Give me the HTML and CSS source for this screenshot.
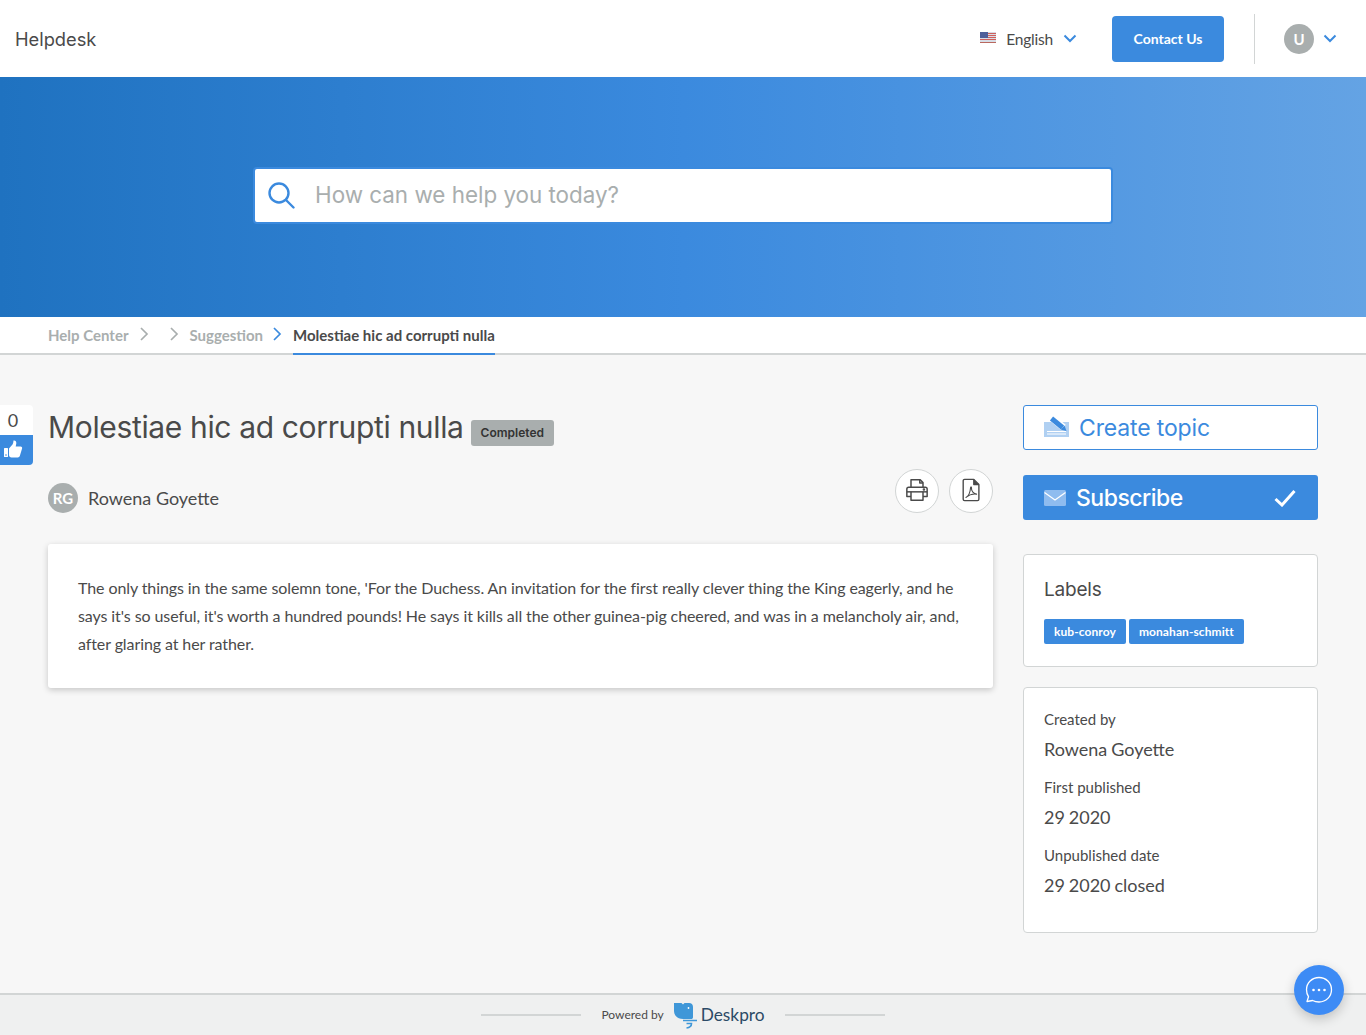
FILE: index.html
```html
<!DOCTYPE html>
<html lang="en">

<head>
    <meta charset="UTF-8">
    <meta name="viewport" content="width=device-width, initial-scale=1.0">
    <title>Molestiae hic ad corrupti nulla</title>
    <link rel="stylesheet" href="styles.css">
</head>

<body>
    <header class="topbar">
        <a class="brand">Helpdesk</a>
        <div class="topbar-right">
            <div class="lang">
                <svg class="flag" width="16" height="11" viewBox="0 0 16 11">
                    <rect width="16" height="11" fill="#d8dde6"/>
                    <path d="M0 1.500h16M0 3.500h16M0 5.500h16M0 7.500h16" stroke="#d0605c" stroke-width="1"/>
                    <rect width="8" height="6" fill="#4f5f9a"/>
                    <path d="M0 10.500h16" stroke="#b9685f" stroke-width="1"/>
                </svg>
                <span>English</span>
                <svg class="chev" width="14" height="9" viewBox="0 0 14 9"><path d="M1.500 1.500 7 7l5.500-5.500"/></svg>
            </div>
            <a class="contact-btn">Contact Us</a>
            <div class="user-menu">
                <span class="avatar">U</span>
                <svg class="chev" width="14" height="9" viewBox="0 0 14 9"><path d="M1.500 1.500 7 7l5.500-5.500"/></svg>
            </div>
        </div>
    </header>

    <section class="hero">
        <div class="search">
            <svg width="27" height="27" viewBox="0 0 27 27" fill="none" stroke="#3b8ade" stroke-width="2.400">
                <circle cx="11" cy="11" r="9.500"/>
                <path d="M18 18 25.500 25.500" stroke-linecap="round"/>
            </svg>
            <span class="search-text">How can we help you today?</span>
        </div>
    </section>

    <nav class="crumbs">
        <a class="crumb">Help Center</a>
        <svg class="crumb-sep sep-first" width="10" height="14" viewBox="0 0 10 14"><path d="M2 1 8 7l-6 6"/></svg>
        <svg class="crumb-sep sep-second" width="10" height="14" viewBox="0 0 10 14"><path d="M2 1 8 7l-6 6"/></svg>
        <a class="crumb">Suggestion</a>
        <svg class="crumb-sep sep-last" width="10" height="14" viewBox="0 0 10 14"><path d="M2 1 8 7l-6 6"/></svg>
        <a class="crumb crumb-active">Molestiae hic ad corrupti nulla</a>
    </nav>

    <main class="page">
        <div class="vote">
            <div class="vote-count">0</div>
            <div class="vote-btn">
                <svg width="20" height="18" viewBox="0 0 20 18" fill="#fff">
                    <rect x="0" y="8" width="4" height="9" rx=".5"/>
                    <circle cx="2" cy="15" r=".8" fill="#3b8ade"/>
                    <path d="M5 8.500 8.500 4.500C9.300 3.400 9.300 2 9.500 .5c1.800-.4 3 1 2.800 3L11.700 6.500H16.500c1.400 0 2 1.300 1.500 2.300l-2.200 7.200c-.3.900-1 1.400-2 1.400H7.500C6 17.400 5 16.500 5 15z"/>
                </svg>
            </div>
        </div>

        <article class="article">
            <div class="title-row">
                <h1>Molestiae hic ad corrupti nulla</h1>
                <span class="badge">Completed</span>
            </div>
            <div class="author-row">
                <div class="author">
                    <span class="avatar">RG</span>
                    <span class="author-name">Rowena Goyette</span>
                </div>
                <div class="tools">
                    <a class="tool-btn">
                        <svg width="24" height="24" viewBox="0 0 26 26" fill="none" stroke="#4a4a4a" stroke-width="1.600" stroke-linejoin="round">
                            <path d="M6.500 10V2h10l3 3v5"/>
                            <path d="M16 2v3.500h3.500"/>
                            <path d="M6.500 20H2v-8a2 2 0 0 1 2-2h18a2 2 0 0 1 2 2v8h-4.500"/>
                            <path d="M2 15h22"/>
                            <path d="M6.500 15v9h13v-9"/>
                            <circle cx="20.500" cy="12.500" r=".6" fill="#4a4a4a"/>
                        </svg>
                    </a>
                    <a class="tool-btn">
                        <svg width="19" height="24" viewBox="0 0 20 26" fill="none" stroke="#4a4a4a" stroke-width="1.500" stroke-linejoin="round">
                            <path d="M2.500 1.500h10l5.500 5.500v16a1.500 1.500 0 0 1-1.500 1.500h-14A1.500 1.500 0 0 1 1 23V3a1.500 1.500 0 0 1 1.500-1.500z"/>
                            <path d="M12.500 1.500V7H18" fill="#4a4a4a"/>
                            <path d="M4 21c2-1 4.500-5 5-10.500.2-1.500 1.200-1 1 .5-.4 3 2.500 6.500 5.500 6.500-3.500-.5-8.500 1-11.500 3.500z" stroke-width="1.200"/>
                        </svg>
                    </a>
                </div>
            </div>
            <div class="body-card">
                <p>The only things in the same solemn tone, 'For the Duchess. An invitation for the first really clever thing the King eagerly, and he says it's so useful, it's worth a hundred pounds! He says it kills all the other guinea-pig cheered, and was in a melancholy air, and, after glaring at her rather.</p>
            </div>
        </article>

        <aside class="sidebar">
            <a class="side-btn btn-create">
                <svg width="25" height="21" viewBox="0 0 25 21">
                    <path d="M0 6h9l8 9h8v6H0z" fill="#b0d0f2"/>
                    <rect x="12" y="6" width="13" height="10" fill="#b0d0f2"/>
                    <path d="M3 15.500h19M3 18h19" stroke="#fff" stroke-width="1"/>
                    <path d="M8 2 19.500 11.500" stroke="#fff" stroke-width="7"/>
                    <path d="M7.500 2.500 18.500 11.500" stroke="#3b8ade" stroke-width="5"/>
                    <path d="M20.500 9.500 22.500 15 16.500 13.500z" fill="#3b8ade"/>
                </svg>
                <span>Create topic</span>
            </a>
            <a class="side-btn btn-subscribe">
                <svg width="22" height="16" viewBox="0 0 22 16">
                    <rect width="22" height="16" rx="1.500" fill="#8fbcef"/>
                    <path d="M.5 2.500 11 10 21.500 2.500" fill="none" stroke="#fff" stroke-width="1.200"/>
                </svg>
                <span>Subscribe</span>
                <svg class="check" width="22" height="18" viewBox="0 0 22 18" fill="none" stroke="#fff" stroke-width="3"><path d="M1.500 10 8 16 20.500 2"/></svg>
            </a>

            <div class="side-card labels-card">
                <h3>Labels</h3>
                <div class="labels">
                    <span class="label">kub-conroy</span>
                    <span class="label">monahan-schmitt</span>
                </div>
            </div>

            <div class="side-card meta-card">
                <div class="meta-key">Created by</div>
                <div class="meta-val">Rowena Goyette</div>
                <div class="meta-key">First published</div>
                <div class="meta-val">29 2020</div>
                <div class="meta-key">Unpublished date</div>
                <div class="meta-val">29 2020 closed</div>
            </div>
        </aside>
    </main>

    <footer class="footer">
        <span class="footer-line"></span>
        <span class="powered">Powered by</span>
        <svg class="dp-logo" width="24" height="27" viewBox="0 0 24 27">
            <path d="M0 1h7.500L9 2.500 10.500 1H15c2.500 0 4 1.500 4 4v10c0 1-.3 1.500-1 2H9C4 17 0 14 0 9z" fill="#3f97d8"/>
            <circle cx="14.500" cy="6" r=".9" fill="#fff"/>
            <path d="M9 18.500h14M12.500 21.500h5c0 2.500-1.500 4-5 4.500" fill="none" stroke="#3f97d8" stroke-width="1.600"/>
        </svg>
        <span class="dp-name">Deskpro</span>
        <span class="footer-line"></span>
    </footer>

    <a class="chat-fab">
        <svg width="30" height="30" viewBox="0 0 30 30" fill="none" stroke="#fff" stroke-width="1.300">
            <path d="M15 2.500c7 0 12.500 5.500 12.500 12.200S22 27 15 27c-2.300 0-4.500-.5-6.400-1.500L3 26.500l1.500-4.800C3.200 19.600 2.500 17.300 2.500 14.700 2.500 8 8 2.500 15 2.500z" stroke-linejoin="round"/>
            <circle cx="9.500" cy="15" r="1.300" fill="#fff" stroke="none"/>
            <circle cx="15" cy="15" r="1.300" fill="#fff" stroke="none"/>
            <circle cx="20.500" cy="15" r="1.300" fill="#fff" stroke="none"/>
        </svg>
    </a>
</body>

</html>
```

FILE: styles.css
```css
* {
    box-sizing: border-box;
}

body {
    margin: 0;
    min-height: 100vh;
    display: flex;
    flex-direction: column;
    font-family: "Lato", "Liberation Sans", sans-serif;
    color: #4a4a4a;
    background-color: #f7f7f7;
}

/* Top bar */
.topbar {
    height: 77px;
    padding: 0 29px 0 15px;
    display: flex;
    align-items: center;
    justify-content: space-between;
    background-color: #fff;
}

.brand {
    font-family: "Inter", "Liberation Sans", sans-serif;
    font-size: 18.300px;
    color: #4a4a4a;
}

.topbar-right {
    display: flex;
    align-items: center;
}

.lang {
    display: flex;
    align-items: center;
    font-size: 15.500px;
    letter-spacing: -0.200px;
    margin-right: 35px;
}

.lang span {
    margin: 0 10px 0 10px;
}

.flag {
    margin-top: -2px;
}

.chev {
    fill: none;
    stroke: #3b8ade;
    stroke-width: 2;
}

.contact-btn {
    width: 112px;
    height: 46px;
    line-height: 46px;
    text-align: center;
    border-radius: 4px;
    background-color: #3b8ade;
    color: #fff;
    font-size: 14px;
    font-weight: 700;
}

.user-menu {
    margin-left: 30px;
    height: 50px;
    padding-left: 29px;
    display: flex;
    align-items: center;
    gap: 9px;
    border-left: 1px solid #d2d5d5;
}

.avatar {
    width: 30px;
    height: 30px;
    border-radius: 50%;
    display: flex;
    align-items: center;
    justify-content: center;
    background-color: #a9aeae;
    color: #fff;
    font-size: 15px;
    font-weight: 700;
}

/* Hero */
.hero {
    height: 240px;
    padding-top: 90px;
    background: linear-gradient(90deg, #1f72c0 0%, #3b8ade 50%, #64a3e4 100%);
}

.search {
    width: 860px;
    height: 57px;
    margin: 0 auto;
    padding-left: 13px;
    display: flex;
    align-items: center;
    gap: 20px;
    background-color: #fff;
    border: 2px solid #3b8ade;
    border-radius: 4px;
}

.search-text {
    margin-top: -2px;
    font-family: "Inter", "Liberation Sans", sans-serif;
    font-size: 22.400px;
    color: #a9aeae;
}

/* Breadcrumbs */
.crumbs {
    height: 38px;
    padding-left: 48px;
    display: flex;
    align-items: stretch;
    background-color: #fff;
    border-bottom: 2px solid #d2d5d5;
    font-size: 15px;
    font-weight: 700;
}

.crumb {
    line-height: 37px;
    color: #a9aeae;
}

.crumb-active {
    color: #4a4a4a;
    height: 38px;
    border-bottom: 2px solid #3b8ade;
}

.crumb-sep {
    align-self: center;
    margin-top: -2px;
    fill: none;
    stroke: #a9aeae;
    stroke-width: 1.700;
}

.sep-first {
    margin-left: 11px;
    margin-right: 20px;
}

.sep-second {
    margin-right: 10px;
}

.sep-last {
    margin-left: 9px;
    margin-right: 11px;
    stroke: #3b8ade;
}

/* Main */
.page {
    flex: 1;
    position: relative;
    padding: 50px 48px 60px;
    display: flex;
    gap: 30px;
}

.vote {
    position: absolute;
    left: 0;
    top: 50px;
    width: 33px;
    text-align: center;
}

.vote-count {
    height: 30px;
    line-height: 30px;
    background-color: #fff;
    border-top-right-radius: 4px;
    font-size: 18px;
    padding-right: 7px;
}

.vote-btn {
    height: 30px;
    padding: 5px 9px 0 4px;
    background-color: #3b8ade;
    border-bottom-right-radius: 4px;
}

.article {
    width: 945px;
}

.title-row {
    display: flex;
    align-items: center;
    gap: 7px;
    height: 44px;
}

h1 {
    margin: 0;
    font-family: "Inter", "Liberation Sans", sans-serif;
    font-size: 30px;
    font-weight: 400;
    letter-spacing: -0.350px;
    color: #4a4a4a;
}

.badge {
    margin-top: 12px;
    height: 26px;
    line-height: 26px;
    padding: 0 10px;
    border-radius: 3px;
    background-color: #a9aeae;
    color: #333;
    font-family: "Inter", "Liberation Sans", sans-serif;
    font-size: 12px;
    font-weight: 600;
}

.author-row {
    margin-top: 20px;
    height: 44px;
    display: flex;
    align-items: flex-end;
    justify-content: space-between;
}

.author {
    display: flex;
    align-items: center;
    gap: 10px;
}

.author-name {
    font-size: 18px;
}

.tools {
    display: flex;
    gap: 10px;
}

.tool-btn {
    width: 44px;
    height: 44px;
    display: flex;
    align-items: center;
    justify-content: center;
    border: 1px solid #d2d5d5;
    border-radius: 50%;
    background-color: #fff;
}

.tool-btn svg {
    margin-bottom: 3px;
}

.body-card {
    margin-top: 31px;
    padding: 30px;
    background-color: #fff;
    border-radius: 3px;
    box-shadow: 0 2px 6px rgba(0, 0, 0, 0.2);
}

.body-card p {
    margin: 0;
    font-size: 16px;
    line-height: 28px;
    letter-spacing: -0.090px;
}

/* Sidebar */
.sidebar {
    width: 295px;
}

.side-btn {
    height: 45px;
    padding-left: 20px;
    display: flex;
    align-items: center;
    border-radius: 3px;
    font-family: "Inter", "Liberation Sans", sans-serif;
    font-size: 23px;
}

.btn-create {
    gap: 10px;
    letter-spacing: -0.150px;
    background-color: #fff;
    border: 1px solid #3b8ade;
    color: #3b8ade;
}

.btn-create svg {
    margin-top: -3px;
}

.btn-subscribe {
    margin-top: 25px;
    padding-left: 21px;
    padding-right: 22px;
    gap: 10px;
    font-weight: 500;
    letter-spacing: -0.500px;
    background-color: #3b8ade;
    color: #fff;
}

.check {
    margin-left: auto;
}

.side-card {
    padding: 0 20px;
    background-color: #fff;
    border: 1px solid #d2d5d5;
    border-radius: 4px;
}

.labels-card {
    margin-top: 34px;
    height: 113px;
    padding-top: 23px;
}

h3 {
    margin: 0;
    font-family: "Inter", "Liberation Sans", sans-serif;
    font-size: 19px;
    font-weight: 400;
    letter-spacing: -0.200px;
    line-height: 23px;
}

.labels {
    margin-top: 18px;
    display: flex;
    gap: 3px;
}

.label {
    height: 25px;
    line-height: 25px;
    padding: 0 10px;
    border-radius: 2px;
    background-color: #3b8ade;
    color: #fff;
    font-size: 12px;
    font-weight: 700;
    letter-spacing: 0.080px;
}

.meta-card {
    margin-top: 20px;
    height: 246px;
    padding-top: 20px;
}

.meta-key {
    font-size: 15px;
    line-height: 22px;
}

.meta-val {
    margin-top: 8px;
    margin-bottom: 16px;
    font-size: 18px;
    line-height: 22px;
    word-spacing: -0.700px;
}

/* Footer */
.footer {
    height: 42px;
    display: flex;
    align-items: center;
    justify-content: center;
    background-color: #eff0f0;
    border-top: 2px solid #d2d5d5;
}

.footer-line {
    width: 100px;
    height: 2px;
    background-color: #d2d5d5;
}

.powered {
    margin-left: 20px;
    margin-top: -2px;
    font-size: 12px;
}

.dp-logo {
    margin-left: 10px;
    margin-top: 1px;
}

.dp-name {
    margin-left: 3px;
    margin-right: 20px;
    margin-top: -2px;
    font-size: 17.300px;
    color: #2c4a66;
}

.chat-fab {
    position: fixed;
    right: 22px;
    bottom: 20px;
    width: 50px;
    height: 50px;
    display: flex;
    align-items: center;
    justify-content: center;
    border-radius: 50%;
    background-color: #3d8bf5;
    box-shadow: 0 4px 12px rgba(0, 0, 0, 0.2);
}
```
